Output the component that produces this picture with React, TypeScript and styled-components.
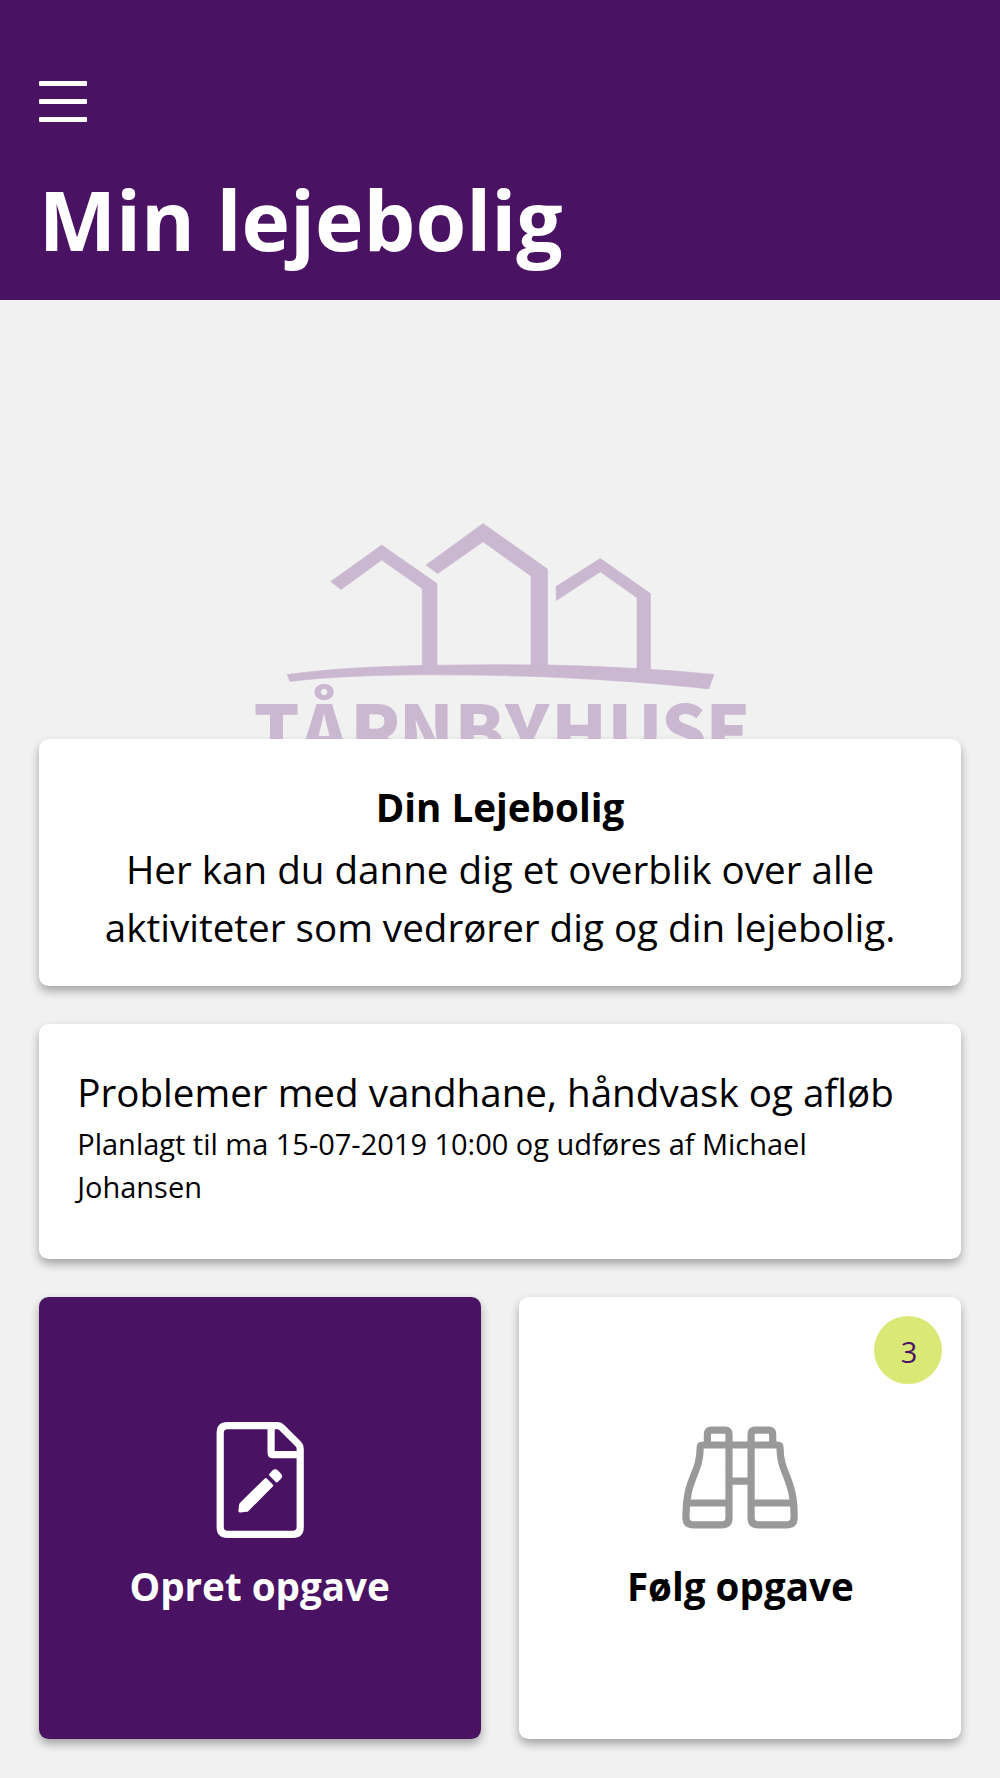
import React from "react";
import styled, { createGlobalStyle } from "styled-components";

const purple = "#4a1263";
const page = "#f1f1f1";
const shadow = "0 5px 10px rgba(0, 0, 0, 0.32)";

const GlobalStyle = createGlobalStyle`
  * { box-sizing: border-box; }
  body {
    margin: 0;
    background: ${page};
    color: #000;
    font-family: "Open Sans", "Noto Sans", sans-serif;
    font-size: 38.6px;
    line-height: 58px;
  }
  h1, h2, p { margin: 0; }
`;

const Screen = styled.div`
  display: flex;
  flex-direction: column;
  width: 1000px;
  height: 1778px;
  overflow: hidden;
  background: ${page};
`;

const Header = styled.header`
  height: 299.5px;
  padding: 81.3px 38.65px 0;
  background: ${purple};
  color: #fff;
`;

const MenuButton = styled.button`
  display: flex;
  flex-direction: column;
  gap: 13.3px;
  width: 48.3px;
  padding: 0;
  border: 0;
  background: none;
`;

const MenuLine = styled.span`
  height: 4.8px;
  border-radius: 1px;
  background: #fff;
`;

const Title = styled.h1`
  margin-top: 40.6px;
  font-size: 82.1px;
  line-height: 112px;
  font-weight: 700;
`;

const Hero = styled.div`
  height: 439.6px;
  overflow: hidden;
`;

const Logo = styled.svg`
  display: block;
  filter: blur(0.7px);
`;

const Wordmark = styled.text`
  font-family: "Noto Sans CJK SC", "Open Sans", sans-serif;
  font-size: 72px;
  font-weight: 900;
`;

const Content = styled.main`
  display: flex;
  flex-direction: column;
  gap: 38.5px;
  padding: 0 38.65px;
`;

const Card = styled.section<{ $height: number; $center?: boolean }>`
  height: ${(p) => p.$height}px;
  padding: 38.65px;
  border-radius: 9.66px;
  background: #fff;
  text-align: ${(p) => (p.$center ? "center" : "left")};
  box-shadow: ${shadow};
`;

const CardTitle = styled.h2`
  margin-bottom: 4px;
  font-size: inherit;
  font-weight: 700;
`;

const Small = styled.p`
  padding-top: 0.9px;
  font-size: 28.98px;
  line-height: 43.5px;
`;

const Tiles = styled.div`
  display: grid;
  grid-template-columns: 1fr 1fr;
  gap: 38.65px;
`;

const Tile = styled.button<{ $primary?: boolean }>`
  position: relative;
  display: flex;
  flex-direction: column;
  align-items: center;
  justify-content: center;
  gap: 18.6px;
  height: 442px;
  padding: 0.6px 0 0;
  border: 0;
  border-radius: 9.66px;
  background: ${(p) => (p.$primary ? purple : "#fff")};
  color: ${(p) => (p.$primary ? "#fff" : "#000")};
  font: inherit;
  font-weight: 700;
  box-shadow: ${shadow};
`;

const Badge = styled.span`
  position: absolute;
  top: 19.3px;
  right: 19.2px;
  display: flex;
  align-items: center;
  justify-content: center;
  width: 67.8px;
  height: 67.8px;
  padding: 2px 0 0 1.5px;
  border-radius: 50%;
  background: #dae876;
  color: ${purple};
  font-size: 29px;
  line-height: 43.5px;
  font-weight: 400;
`;

function HousesLogo() {
  return (
    <Logo width="1000" height="440" viewBox="0 299.9 1000 440" fill="#cab7d0">
      <g stroke="#cab7d0" strokeWidth="0.6">
        <path d="M330.7 581.5 L381.7 545 L437 583.5 V670 H422.3 V588.5 L381.7 560 L341 589.5 Z" />
        <path d="M426 565 L483 523.3 L547.5 569 V670 H531 V576 L483 541.7 L437.7 573.5 Z" />
        <path d="M556 586.5 L600.3 558.3 L650.5 593.5 V672 H637 V597.7 L600.3 571.7 L556.3 600.5 Z" />
        <path d="M287.3 674.5 Q340 667 422 665.4 Q485 664 547 664.9 Q640 667 714 674.3 L708.7 688.8 Q640 681 547 676.8 Q485 674.5 422 674.7 Q340 675.2 290 681.3 Z" />
      </g>
      <Wordmark y="758" x="253.6 300.5 350.2 398.7 454.4 505.3 551.3 607.6 661 705.4">
        TÅRNBYHUSE
      </Wordmark>
    </Logo>
  );
}

function EditFileIcon() {
  return (
    <svg width="116" height="116" viewBox="201.5 1421.3 116 116" fill="none">
      <path
        d="M227 1425 H277 Q279.500 1425 281.500 1427 L298 1443.500 Q299.700 1445.300 299.700 1448 V1526.300 Q299.700 1533.700 292.300 1533.700 H227 Q219.700 1533.700 219.700 1526.300 V1432.300 Q219.700 1425 227 1425 Z"
        stroke="#fff"
        strokeWidth="7.2"
      />
      <path d="M270.6 1426 V1452 Q270.600 1454 272.600 1454 H299" stroke="#fff" strokeWidth="7.2" />
      <path
        d="M264.3 1477.800 Q265.300 1476.800 266.300 1477.800 L272.300 1483.800 Q273.300 1484.800 272.300 1485.800 L248 1510.200 Q247.300 1511 246.300 1511.100 L240 1511.900 Q237.600 1512 237.900 1509.800 L238.700 1503.700 Q238.900 1502.700 239.600 1502 Z"
        fill="#fff"
      />
      <path
        d="M268.900 1474.900 Q268 1474 268.900 1473 L271.900 1469.900 Q274.700 1467.300 277.500 1469.900 L280.300 1472.700 Q283 1475.500 280.300 1478.300 L277.200 1481.400 Q276.200 1482.300 275.200 1481.300 Z"
        fill="#fff"
      />
    </svg>
  );
}

function BinocularsIcon() {
  return (
    <svg
      width="116"
      height="116"
      viewBox="682.3 1421.5 116 116"
      fill="none"
      stroke="#999"
      strokeWidth="7.2"
      strokeLinejoin="round"
    >
      <path d="M707.700 1444.500 V1434 Q707.700 1429.700 712 1429.700 H725 Q729.300 1429.700 729.300 1434 V1517.300 Q729.300 1524.300 722.300 1524.300 H693.300 Q686.300 1524.300 686.300 1517.300 C685.500 1478 700.500 1474 700.500 1447 Q700.500 1444.500 703 1444.500 H777.800 Q780.300 1444.500 780.300 1447 C780.300 1474 795.200 1478 794.400 1517.300 Q794.400 1524.300 787.400 1524.300 H758.400 Q751.400 1524.300 751.400 1517.300 V1434 Q751.400 1429.700 755.700 1429.700 H768.700 Q773 1429.700 773 1434 V1444.500" />
      <path d="M729.300 1480.700 H751.400 M689 1502.500 H729.300 M751.400 1502.500 H791.700" />
    </svg>
  );
}

export default function App() {
  return (
    <Screen>
      <GlobalStyle />
      <Header>
        <MenuButton aria-label="Menu">
          <MenuLine />
          <MenuLine />
          <MenuLine />
        </MenuButton>
        <Title>Min lejebolig</Title>
      </Header>
      <Hero>
        <HousesLogo />
      </Hero>
      <Content>
        <Card $height={246.6} $center>
          <CardTitle>Din Lejebolig</CardTitle>
          <p>Her kan du danne dig et overblik over alle aktiviteter som vedrører dig og din lejebolig.</p>
        </Card>
        <Card $height={234.4}>
          <p>Problemer med vandhane, håndvask og afløb</p>
          <Small>Planlagt til ma 15-07-2019 10:00 og udføres af Michael Johansen</Small>
        </Card>
        <Tiles>
          <Tile $primary>
            <EditFileIcon />
            <span>Opret opgave</span>
          </Tile>
          <Tile>
            <Badge>3</Badge>
            <BinocularsIcon />
            <span>Følg opgave</span>
          </Tile>
        </Tiles>
      </Content>
    </Screen>
  );
}
